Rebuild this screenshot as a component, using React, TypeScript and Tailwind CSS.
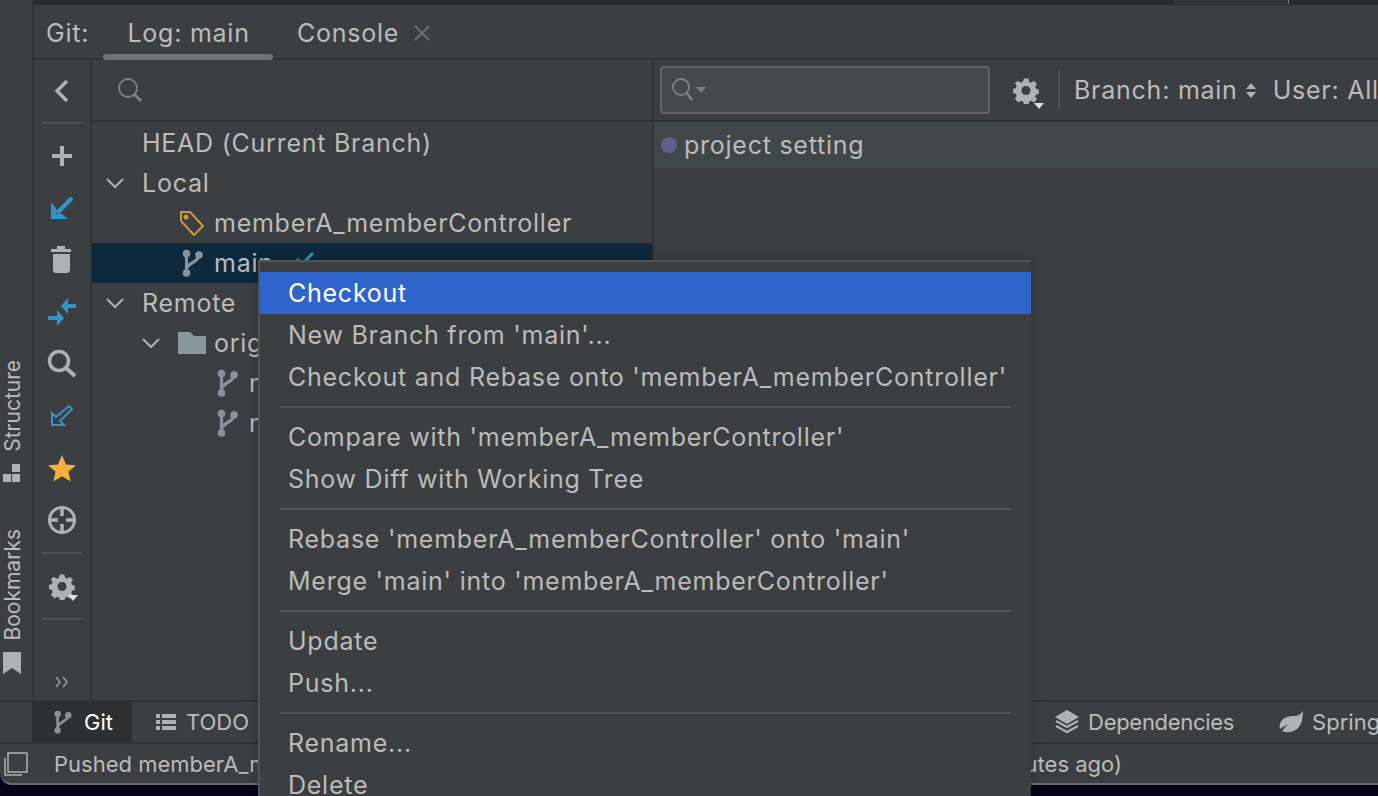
import React from "react";

const Branch = ({ className = "" }: { className?: string }) => (
  <svg width="24" height="28" viewBox="0 0 24 28" className={className} fill="none">
    <circle cx="4.500" cy="4.500" r="3.800" fill="#87939a" />
    <circle cx="4.500" cy="24" r="3.800" fill="#87939a" />
    <circle cx="17" cy="6" r="3.800" fill="#87939a" />
    <path d="M4.500 4.500V24M17 6C17 14 4.500 13 4.500 21" stroke="#87939a" strokeWidth="3.200" />
  </svg>
);

const Chevron = () => (
  <svg width="18" height="12" viewBox="0 0 18 12" fill="none">
    <path d="M1 2L9 10L17 2" stroke="#afb1b3" strokeWidth="2" />
  </svg>
);

const Gear = ({ color = "#afb1b3" }: { color?: string }) => (
  <svg width="28" height="28" viewBox="0 0 28 28">
    <g fill={color}>
      <path d="M11.500 1h5l.7 3.600 2.400 1 3-2 3.400 3.600-2 3 1 2.400 3 .6v5l-3 .7-1 2.400 2 3-3.400 3.400-3-2-2.400 1-.7 3h-5l-.7-3-2.400-1-3 2L1.400 23.400l2-3-1-2.400-3-.7v-5l3-.6 1-2.400-2-3L4.800 3.600l3 2 2.400-1z" transform="translate(1.600 1.600) scale(.9)" />
    </g>
    <circle cx="14" cy="14.500" r="4.500" fill="#3c3f41" />
  </svg>
);

const rows = [
  [{ t: "Checkout", active: true }, { t: "New Branch from 'main'..." }, { t: "Checkout and Rebase onto 'memberA_memberController'" }],
  [{ t: "Compare with 'memberA_memberController'" }, { t: "Show Diff with Working Tree" }],
  [{ t: "Rebase 'memberA_memberController' onto 'main'" }, { t: "Merge 'main' into 'memberA_memberController'" }],
  [{ t: "Update" }, { t: "Push..." }],
  [{ t: "Rename..." }, { t: "Delete" }],
];

const ToolSep = () => <div className="w-10 h-[2px] bg-[#4f5254] shrink-0" />;

const TreeRow = ({ pl, selected, children }: { pl: number; selected?: boolean; children: React.ReactNode }) => (
  <div className={`h-10 flex items-center whitespace-nowrap ${selected ? "bg-[#0d293e]" : ""}`} style={{ paddingLeft: pl }}>
    {children}
  </div>
);

export default function App() {
  return (
    <div
      className="relative w-[1378px] h-[796px] overflow-hidden flex flex-col bg-[#05021a] text-[#bbbbbb] text-[25px] tracking-[0.75px] leading-none"
      style={{ fontFamily: "Inter, 'Noto Sans', sans-serif" }}
    >
      <div className="flex h-[700px] shrink-0 bg-[#3c3f41]">
        {/* left stripe */}
        <div className="w-[24px] shrink-0 flex flex-col items-center justify-end pb-[26px] pr-[8px] box-content border-r-2 border-[#323232] tracking-normal">
          <span className="[writing-mode:vertical-rl] rotate-180 text-[21px] text-[#bbbbbb]">Structure</span>
          <svg width="20" height="20" viewBox="0 0 20 20" className="mt-[11px] mb-[46px] shrink-0" fill="#afb1b3">
            <rect x="1" y="11" width="8" height="8" />
            <rect x="10" y="1" width="8" height="8" />
            <rect x="10" y="11" width="8" height="8" />
          </svg>
          <span className="[writing-mode:vertical-rl] rotate-180 text-[21px] text-[#bbbbbb]">Bookmarks</span>
          <svg width="18" height="22" viewBox="0 0 18 22" className="mt-[12px] shrink-0" fill="#afb1b3">
            <path d="M0 0H18V22L9 16L0 22Z" />
          </svg>
        </div>

        <div className="flex-1 min-w-0 flex flex-col w-0">
          <div className="h-[5px] bg-[#2b2b2b] shrink-0 flex justify-end">
            <div className="w-[116px] bg-[#343638] mr-[89px] h-[4px] border-r border-[#77797b]" />
          </div>
          {/* tabs */}
          <div className="h-[55px] shrink-0 flex border-b-2 border-[#323232] pl-[12px] items-stretch whitespace-nowrap">
            <div className="flex items-center pt-[3px]">Git:</div>
            <div className="ml-[14px] w-[170px] relative flex items-center justify-center pt-[3px] pl-[1px]">
              Log: main
              <div className="absolute left-0 right-0 bottom-[-2px] h-[6px] rounded-full bg-[#6f7477]" />
            </div>
            <div className="ml-[24px] flex items-center pt-[3px]">
              Console
              <svg width="16" height="16" viewBox="0 0 16 16" className="ml-[15px]" stroke="#6c7073" strokeWidth="1.800">
                <path d="M1 1L15 15M15 1L1 15" />
              </svg>
            </div>
          </div>

          <div className="flex-1 flex min-h-0">
            {/* vertical toolbar */}
            <div className="w-[56px] shrink-0 border-r-2 border-[#323232] box-content flex flex-col items-center">
              <div className="h-[62px] flex items-center justify-center shrink-0 pr-[2px]">
                <svg width="16" height="24" viewBox="0 0 16 24" fill="none" stroke="#afb1b3" strokeWidth="3.400"><path d="M14 2L4 12L14 22" /></svg>
              </div>
              <ToolSep />
              <div className="h-[52px] flex items-center justify-center mt-[6px] shrink-0">
                <svg width="22" height="22" viewBox="0 0 22 22" stroke="#afb1b3" strokeWidth="4"><path d="M11 1V21M1 11H21" /></svg>
              </div>
              <div className="h-[52px] flex items-center justify-center shrink-0">
                <svg width="24" height="24" viewBox="0 0 24 24" fill="#3592c4"><path d="M22 2L7 17" stroke="#3592c4" strokeWidth="4.500" /><path d="M1 6L1 23H18L12 18H6V12Z" /></svg>
              </div>
              <div className="h-[52px] flex items-center justify-center shrink-0">
                <svg width="22" height="28" viewBox="0 0 22 28" fill="#afb1b3"><rect x="0" y="3" width="20" height="3" /><rect x="6" y="0" width="8" height="3" /><path d="M2 8H19V24C19 26 18 27 16 27H5C3 27 2 26 2 24Z" /></svg>
              </div>
              <div className="h-[52px] flex items-center justify-center shrink-0">
                <svg width="30" height="30" viewBox="0 0 30 30" fill="#3592c4"><path d="M14 9L21 1V7H29V11H21V17Z" /><path d="M1 19H10V13L17 21L10 29V23H1Z" /></svg>
              </div>
              <div className="h-[52px] flex items-center justify-center shrink-0">
                <svg width="30" height="30" viewBox="0 0 30 30" fill="none" stroke="#afb1b3" strokeWidth="3.500"><circle cx="12" cy="12" r="9.500" /><path d="M19 19L28 27" strokeWidth="4" /></svg>
              </div>
              <div className="h-[52px] flex items-center justify-center shrink-0">
                <svg width="24" height="24" viewBox="0 0 24 24" fill="none" stroke="#3592c4" strokeWidth="2"><path d="M19 2L22 5L10 17L14 21H2V9L6 13Z" /></svg>
              </div>
              <div className="h-[52px] flex items-center justify-center shrink-0">
                <svg width="30" height="28" viewBox="0 0 30 28" fill="#f4af3d"><path d="M15 1L19 10.500L29 11.200L21.400 17.800L23.800 27.500L15 22.300L6.200 27.500L8.600 17.800L1 11.200L11 10.500Z" /></svg>
              </div>
              <div className="h-[52px] flex items-center justify-center shrink-0">
                <svg width="30" height="30" viewBox="0 0 30 30" fill="none" stroke="#afb1b3" strokeWidth="3"><circle cx="15" cy="15" r="12.500" /><path d="M15 3V11M15 19V27M3 15H11M19 15H27" strokeWidth="3.500" /></svg>
              </div>
              <div className="mt-[6px]"><ToolSep /></div>
              <div className="h-[64px] w-full flex items-center justify-center relative shrink-0">
                <Gear />
                <div className="absolute left-[34px] top-[41px] w-0 h-0 border-x-[5px] border-x-transparent border-t-[6px] border-t-[#dddddd]" />
              </div>
              <ToolSep />
              <div className="mt-auto mb-[6px] h-[24px] flex items-center">
                <svg width="16" height="12" viewBox="0 0 16 12" fill="none" stroke="#9a9c9e" strokeWidth="1.500"><path d="M2 1L6 6L2 11M9 1L13 6L9 11" /></svg>
              </div>
            </div>

            {/* tree */}
            <div className="w-[560px] shrink-0 border-r-2 border-[#323232] box-content flex flex-col">
              <div className="h-[60px] shrink-0 flex items-center pl-[25px] border-b-2 border-[#323232] box-content mb-[1px]">
                <svg width="26" height="26" viewBox="0 0 26 26" fill="none" stroke="#7a8287" strokeWidth="1.800"><circle cx="11" cy="11" r="9" /><path d="M17 17L24 24" strokeWidth="2.600" /></svg>
              </div>
              <TreeRow pl={50}>HEAD (Current Branch)</TreeRow>
              <TreeRow pl={14}><Chevron /><span className="ml-[18px]">Local</span></TreeRow>
              <TreeRow pl={88}>
                <svg width="24" height="25" viewBox="0 0 24 25" fill="none" stroke="#c69a3b" strokeWidth="2"><path d="M1 1H10L23 15L14 24L1 10Z" strokeLinejoin="round" /><circle cx="6" cy="6" r="1.500" fill="#c69a3b" /></svg>
                <span className="ml-[10px]">memberA_memberController</span>
              </TreeRow>
              <TreeRow pl={90} selected>
                <Branch />
                <span className="ml-[8px]">main</span>
                <svg width="18" height="14" viewBox="0 0 18 14" fill="none" stroke="#3592c4" strokeWidth="3" className="ml-[22px] -mt-[8px]"><path d="M1 7L6 12L17 1" /></svg>
              </TreeRow>
              <TreeRow pl={14}><Chevron /><span className="ml-[18px]">Remote</span></TreeRow>
              <TreeRow pl={50}>
                <Chevron />
                <svg width="28" height="22" viewBox="0 0 28 22" fill="#8a979f" className="ml-[18px]"><path d="M0 0H12L16 4H28V22H0Z" /></svg>
                <span className="ml-[8px]">origin</span>
              </TreeRow>
              <TreeRow pl={125}><Branch /><span className="ml-[8px]">main</span></TreeRow>
              <TreeRow pl={125}><Branch /><span className="ml-[8px]">main</span></TreeRow>
            </div>

            {/* log */}
            <div className="flex-1 min-w-0 flex flex-col">
              <div className="h-[60px] shrink-0 flex items-center border-b-2 border-[#323232] box-content pl-[6px] whitespace-nowrap">
                <div className="w-[330px] h-[48px] rounded-[4px] border-2 border-[#646464] bg-[#45494a] flex items-center pl-[9px] shrink-0">
                  <svg width="26" height="26" viewBox="0 0 26 26" fill="none" stroke="#7a8287" strokeWidth="1.800"><circle cx="10" cy="10" r="8" /><path d="M15 15L21 23" strokeWidth="2.600" /></svg>
                  <div className="w-0 h-0 border-x-[5px] border-x-transparent border-t-[6px] border-t-[#7a8287] -ml-[1px]" />
                </div>
                <div className="relative ml-[20px] w-[32px] h-[32px] flex items-center justify-center shrink-0">
                  <Gear />
                  <div className="absolute left-[24px] top-[29px] w-0 h-0 border-x-[5px] border-x-transparent border-t-[6px] border-t-[#dddddd]" />
                </div>
                <div className="w-[2px] h-[40px] bg-[#4f5254] ml-[16px] shrink-0" />
                <span className="ml-[14px]">Branch: main</span>
                <div className="ml-[8px] flex flex-col gap-[3px]">
                  <div className="w-0 h-0 border-x-[5px] border-x-transparent border-b-[6px] border-b-[#afb1b3]" />
                  <div className="w-0 h-0 border-x-[5px] border-x-transparent border-t-[6px] border-t-[#afb1b3]" />
                </div>
                <span className="ml-[17px]">User: All</span>
              </div>
              <div className="h-[46px] bg-[#3f4748] flex items-center pl-[7px] shrink-0">
                <div className="w-[16px] h-[16px] rounded-full bg-[#5f6288]" />
                <span className="ml-[7px]">project setting</span>
              </div>
            </div>
          </div>
        </div>
      </div>

      {/* tool window bar */}
      <div className="h-[44px] shrink-0 border-y-2 border-[#323232] bg-[#3c3f41] flex items-center whitespace-nowrap text-[22px] tracking-normal pl-[32px]">
        <div className="h-full w-[100px] bg-[#2d2f31] flex items-center pl-[20px] text-white shrink-0">
          <Branch className="scale-[.85]" />
          <span className="ml-[8px]">Git</span>
        </div>
        <svg width="20" height="18" viewBox="0 0 20 18" fill="#afb1b3" className="ml-[24px] shrink-0"><path d="M0 1H4V5H0ZM6 1H20V5H6ZM0 7H4V11H0ZM6 7H20V11H6ZM0 13H4V17H0ZM6 13H20V17H6Z" /></svg>
        <span className="ml-[10px]">TODO</span>
        <div className="ml-[805px] flex items-center shrink-0">
          <svg width="26" height="24" viewBox="0 0 26 24" fill="#afb1b3"><path d="M13 0L25 7L13 14L1 7Z" /><path d="M2 11L13 17L24 11" fill="none" stroke="#afb1b3" strokeWidth="2" /><path d="M2 16L13 22L24 16" fill="none" stroke="#afb1b3" strokeWidth="2" /></svg>
          <span className="ml-[8px] tracking-[-0.3px]">Dependencies</span>
        </div>
        <svg width="24" height="22" viewBox="0 0 24 22" fill="#afb1b3" className="ml-[45px] shrink-0"><path d="M24 0C24 12 20 20 11 21C8 21.500 5 21 3 20L9 13L1 18C-1 10 6 5 14 5C19 5 22 3 24 0Z" /></svg>
        <span className="ml-[9px]">Spring</span>
      </div>

      {/* status */}
      <div className="h-[38px] shrink-0 border-b-2 border-[#6a6c6e] box-content bg-[#3c3f41] rounded-bl-[12px] flex items-center whitespace-nowrap text-[22px] tracking-normal pt-[1px]">
        <svg width="24" height="24" viewBox="0 0 24 24" fill="none" stroke="#afb1b3" strokeWidth="1.500" className="ml-[4px] shrink-0"><rect x="4" y="1" width="19" height="19" /><path d="M1 6V23H18" /></svg>
        <span className="ml-[26px]">Pushed memberA_m</span>
        <span className="ml-auto mr-[256px]">utes ago)</span>
      </div>

      {/* popup */}
      <div className="absolute left-[258px] top-[260px] w-[773px] h-[540px] bg-[#3c3f41] border-l-2 border-t-2 border-[#515456] pt-[10px] whitespace-nowrap shadow-[0_0_12px_rgba(0,0,0,0.2)]">
        {rows.map((group, i) => (
          <div key={i}>
            {i > 0 && <div className="h-[18px] flex items-center px-[20px]"><div className="h-[2px] w-full bg-[#515456]" /></div>}
            {group.map((r: { t: string; active?: boolean }) => (
              <div key={r.t} className={`h-[42px] flex items-center pl-[28px] ${r.active ? "bg-[#2f65ca] text-white" : ""}`}>
                {r.t}
              </div>
            ))}
          </div>
        ))}
      </div>
    </div>
  );
}
